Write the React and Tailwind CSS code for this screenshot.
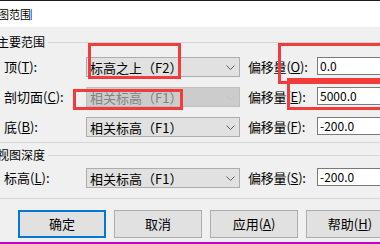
import React from 'react'

const font = "font-['Noto_Sans_CJK_SC','Noto_Sans',sans-serif]"

function Chevron({ disabled }) {
  return (
    <svg width="9" height="5" viewBox="0 0 9 5" className="shrink-0">
      <polyline points="0.5,0.5 4.5,4.5 8.5,0.5" fill="none" stroke={disabled ? '#c4c4c4' : '#606060'} strokeWidth="1" />
    </svg>
  )
}

function Select({ text, disabled }) {
  return (
    <div
      className={`w-[154px] h-[20px] shrink-0 flex items-center justify-between pl-[3px] pr-[4px] border text-[13px] leading-none ${
        disabled ? 'bg-[#cccccc] border-[#bfbfbf] text-[#838383]' : 'bg-[#e1e1e1] border-[#adadad] text-black'
      }`}
    >
      <span className="whitespace-nowrap">{text}</span>
      <Chevron disabled={disabled} />
    </div>
  )
}

function Row({ label, k, select, disabled, offKey, value }) {
  return (
    <div className="flex items-start h-[20px] pl-[4px]">
      <div className="w-[82px] h-[20px] shrink-0 flex items-center text-[13px] whitespace-nowrap">
        {label}(<span className="underline">{k}</span>):
      </div>
      <Select text={select} disabled={disabled} />
      <div className="w-[77px] pl-[8px] h-[20px] shrink-0 flex items-center text-[13px] tracking-[-0.2px] whitespace-nowrap">
        偏移量(<span className="underline">{offKey}</span>):
      </div>
      <div className="w-[90px] h-[18px] shrink-0 bg-white border border-[#7a7a7a] flex items-center pl-[2px] text-[12px] leading-none">
        {value}
      </div>
    </div>
  )
}

function Header({ children }) {
  return (
    <div className="flex items-center h-[14px]">
      <span className="text-[12px] leading-[14px] -ml-[3px] pr-[3px] whitespace-nowrap">{children}</span>
      <div className="flex-1 h-px bg-[#d5d5d5]" />
    </div>
  )
}

function Btn({ children, primary }) {
  return (
    <div
      className={`w-[88px] h-[28px] shrink-0 flex items-center justify-center bg-[#e1e1e1] text-[13px] ${
        primary ? 'border-2 border-[#0078d7]' : 'border border-[#adadad]'
      }`}
    >
      {children}
    </div>
  )
}

export default function App() {
  return (
    <div className={`relative w-[380px] h-[244px] overflow-hidden flex flex-col text-black ${font}`}>
      <div className="h-px bg-[#1c1c28]" />
      <div className="h-[26px] bg-white flex items-center">
        <span className="text-[11px] -ml-[13px] whitespace-nowrap">视图范围</span>
        <span className="w-px h-[11px] bg-[#3399ff]" />
      </div>

      <div className="flex-1 bg-[#f0f0f0] flex flex-col">
        <div className="mt-[8px]">
          <Header>主要范围</Header>
        </div>
        <div className="mt-[8px] flex flex-col gap-[10px]">
          <Row label="顶" k="T" select="标高之上（F2）" offKey="O" value="0.0" />
          <Row label="剖切面" k="C" select="相关标高（F1）" disabled offKey="E" value="5000.0" />
          <Row label="底" k="B" select="相关标高（F1）" offKey="F" value="-200.0" />
        </div>
        <div className="mt-[5px] h-px bg-[#d5d5d5]" />

        <div className="mt-[5px]">
          <Header>视图深度</Header>
        </div>
        <div className="mt-[6px]">
          <Row label="标高" k="L" select="相关标高（F1）" offKey="S" value="-200.0" />
        </div>
        <div className="mt-[10px] h-px bg-[#d5d5d5]" />

        <div className="mt-[11px] flex gap-[8px] pl-[18px]">
          <Btn primary>确定</Btn>
          <Btn>取消</Btn>
          <Btn>
            应用(<span className="underline">A</span>)
          </Btn>
          <Btn>
            帮助(<span className="underline">H</span>)
          </Btn>
        </div>
      </div>
      <div className="h-[2px] bg-[#c400c4]" />

      {/* red annotation boxes */}
      <div className="absolute left-[88px] top-[43px] w-[93px] h-[36px] border-[3px] border-[#f23c3c]" />
      <div className="absolute left-[73px] top-[89px] w-[110px] h-[21px] border-[3px] border-[#f23c3c]" />
      <div className="absolute left-[278px] top-[43px] w-[140px] h-[41px] border-[3px] border-[#f23c3c]" />
      <div className="absolute left-[287px] top-[78px] w-[140px] h-[32px] border-[3px] border-[#f23c3c]" />
    </div>
  )
}
